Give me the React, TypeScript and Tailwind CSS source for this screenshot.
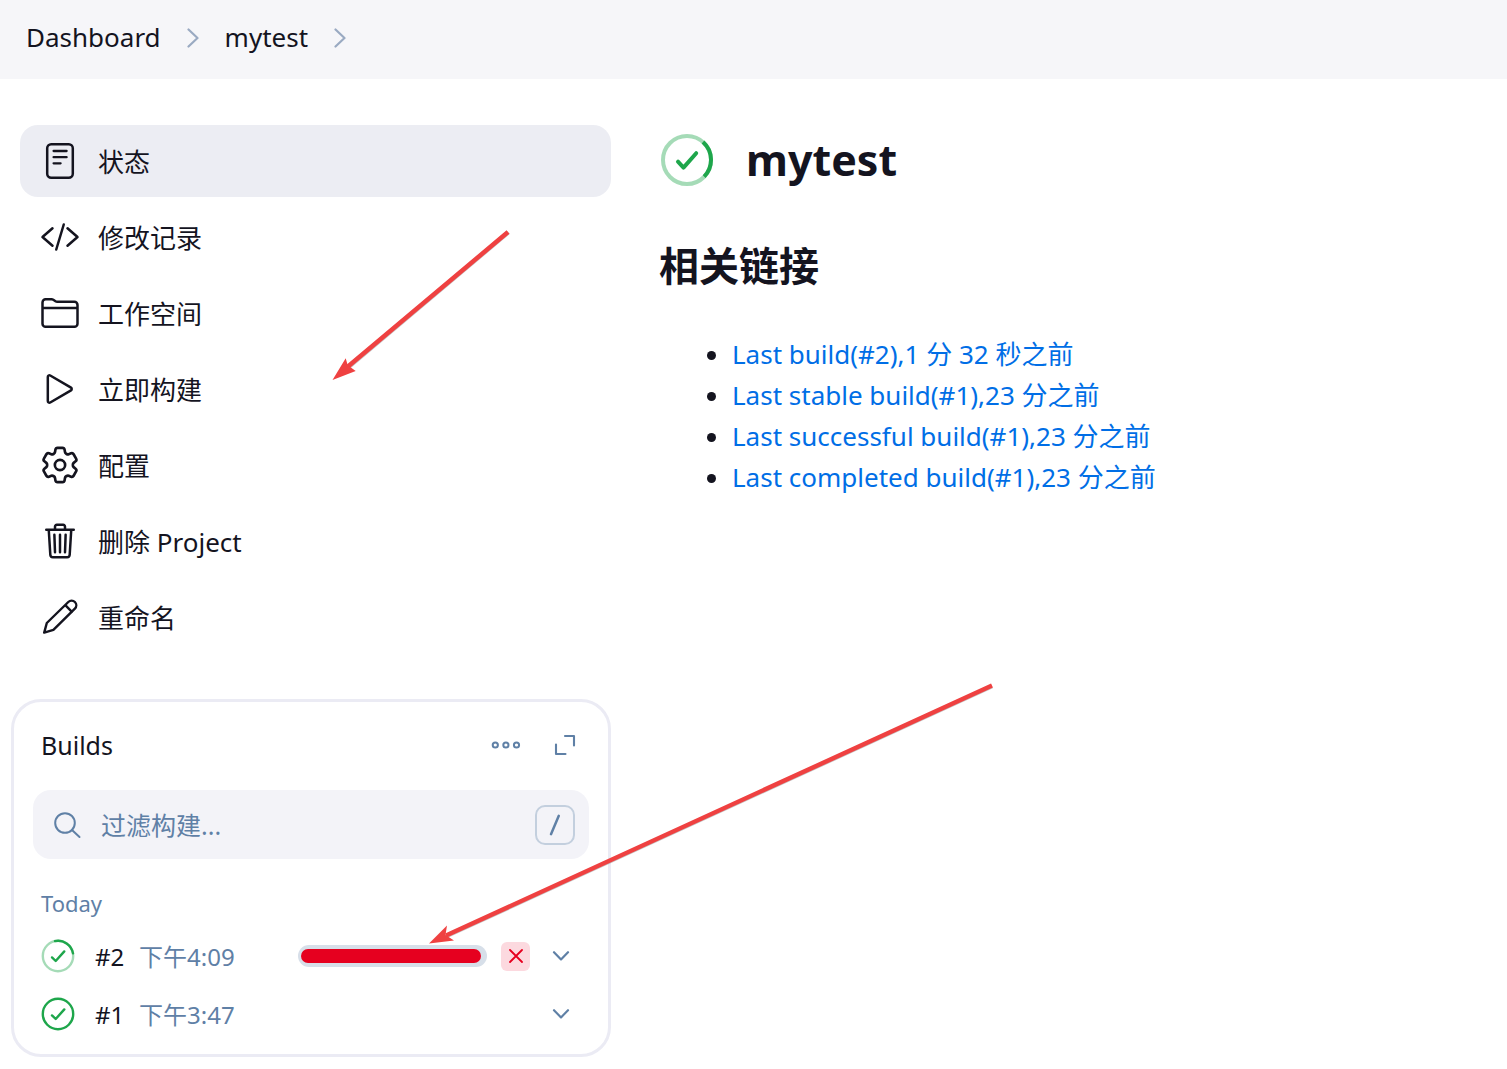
import type { ReactNode } from 'react';

const GEAR =
  'M9.594 3.94c.09-.542.56-.94 1.11-.94h2.593c.55 0 1.02.398 1.11.94l.213 1.281c.063.374.313.686.645.87.074.04.147.083.22.127.325.196.72.257 1.075.124l1.217-.456a1.125 1.125 0 0 1 1.37.49l1.296 2.247a1.125 1.125 0 0 1-.26 1.431l-1.003.827c-.293.241-.438.613-.43.992a7.723 7.723 0 0 1 0 .255c-.008.378.137.75.43.991l1.004.827c.424.35.534.955.26 1.43l-1.298 2.247a1.125 1.125 0 0 1-1.369.491l-1.217-.456c-.355-.133-.75-.072-1.076.124a6.47 6.47 0 0 1-.22.128c-.331.183-.581.495-.644.869l-.213 1.281c-.09.543-.56.94-1.11.94h-2.594c-.55 0-1.019-.398-1.11-.94l-.213-1.281c-.062-.374-.312-.686-.644-.87a6.52 6.52 0 0 1-.22-.127c-.325-.196-.72-.257-1.076-.124l-1.217.456a1.125 1.125 0 0 1-1.369-.49l-1.297-2.247a1.125 1.125 0 0 1 .26-1.431l1.004-.827c.292-.24.437-.613.43-.991a6.932 6.932 0 0 1 0-.255c.007-.38-.138-.751-.43-.992l-1.004-.827a1.125 1.125 0 0 1-.26-1.43l1.297-2.247a1.125 1.125 0 0 1 1.37-.491l1.216.456c.356.133.751.072 1.076-.124.072-.044.146-.086.22-.128.332-.183.582-.495.644-.869l.214-1.28Z';

function Icon({ box, stroke, children }: { box: string; stroke: number; children: ReactNode }) {
  return (
    <svg
      viewBox={box}
      className="size-10 shrink-0"
      fill="none"
      stroke="currentColor"
      strokeWidth={stroke}
      strokeLinecap="round"
      strokeLinejoin="round"
      aria-hidden="true"
    >
      {children}
    </svg>
  );
}

const tasks: { label: string; icon: ReactNode }[] = [
  {
    label: '状态',
    icon: (
      <Icon box="0 0 40 40" stroke={2.5}>
        <rect x="7.2" y="3.3" width="25.6" height="33.4" rx="4" />
        <path d="M13.6 10h13M13.6 16.2h13M13.6 22.3h7" strokeWidth="2.3" />
      </Icon>
    ),
  },
  {
    label: '修改记录',
    icon: (
      <Icon box="0 0 512 512" stroke={32}>
        <path d="M160 368L32 256l128-112M352 368l128-112-128-112M304 96l-96 320" />
      </Icon>
    ),
  },
  {
    label: '工作空间',
    icon: (
      <Icon box="0 0 512 512" stroke={32}>
        <path d="M440 432H72a40 40 0 01-40-40V120a40 40 0 0140-40h75.89a40 40 0 0122.19 6.72l27.84 18.56a40 40 0 0022.19 6.72H440a40 40 0 0140 40v240a40 40 0 01-40 40zM32 192h448" />
      </Icon>
    ),
  },
  {
    label: '立即构建',
    icon: (
      <Icon box="0 0 512 512" stroke={32}>
        <path d="M100 103v306c0 17.44 17 28.52 31 20.16l265.900-156.37c12.12-7.25 12.12-26.33 0-33.58L131 82.84c-14-8.36-31 2.72-31 20.16z" />
      </Icon>
    ),
  },
  {
    label: '配置',
    icon: (
      <Icon box="1.5 1.5 21 21" stroke={1.4}>
        <path d={GEAR} />
        <circle cx="12" cy="12" r="2.7" />
      </Icon>
    ),
  },
  {
    label: '删除 Project',
    icon: (
      <Icon box="0 0 512 512" stroke={32}>
        <path d="M112 112l20 320c.95 18.49 14.4 32 32 32h184c17.67 0 30.87-13.51 32-32l20-320M80 112h352M192 112V72a23.93 23.93 0 0124-24h80a23.93 23.93 0 0124 24v40M256 176v224M184 176l8 224M328 176l-8 224" />
      </Icon>
    ),
  },
  {
    label: '重命名',
    icon: (
      <Icon box="0 0 40 40" stroke={2.4}>
        <path d="M4.2 35.6L6.8 26 28.3 5a4.6 4.6 0 016.600 6.600L13.4 32.8zM25.300 8.200l6.600 6.600" />
      </Icon>
    ),
  },
];

const links = [
  'Last build(#2),1 分 32 秒之前',
  'Last stable build(#1),23 分之前',
  'Last successful build(#1),23 分之前',
  'Last completed build(#1),23 分之前',
];

function Crumb() {
  return (
    <svg viewBox="0 0 12 20" className="h-5 w-3" fill="none" stroke="#9aaac2" strokeWidth="2.2" strokeLinecap="round" strokeLinejoin="round" aria-hidden="true">
      <path d="M1.5 1.5L10.5 10l-9 8.5" />
    </svg>
  );
}

function BuildStatus({ running }: { running: boolean }) {
  return (
    <svg viewBox="0 0 34 34" className="size-[34px] shrink-0" fill="none" stroke="#1ea64b" strokeWidth="2.4" strokeLinecap="round" strokeLinejoin="round" aria-hidden="true">
      <circle cx="17" cy="17" r="15.2" strokeOpacity={running ? 0.4 : 1} />
      {running && <path d="M14 2.1A15.2 15.2 0 0132 14.4" />}
      <path d="M11 18.4l3.7 3.6 8.6-9.6" />
    </svg>
  );
}

function BuildRow({ id, time, running }: { id: string; time: string; running: boolean }) {
  return (
    <li className="flex h-[58px] items-center">
      <BuildStatus running={running} />
      <a href="#build" className="ml-5 w-11 pt-0.5 text-[24px]">
        {id}
      </a>
      <span className="pt-0.5 text-[24px] text-[#5f80a6]">{time}</span>
      <div className="ml-auto flex items-center">
        {running && (
          <>
            <div role="progressbar" aria-label="构建进度" className="flex h-[22px] w-[189px] items-center rounded-full bg-[#d7dfe9] px-[3px]">
              <div className="h-3.5 w-[180px] rounded-full bg-[#e6001f]" />
            </div>
            <button type="button" aria-label="取消" className="ml-3.5 flex size-[29px] items-center justify-center rounded-md bg-[#fcd9df]">
              <svg viewBox="0 0 14 14" className="size-3.5" fill="none" stroke="#e6001f" strokeWidth="1.8" strokeLinecap="round">
                <path d="M1 1l12 12M13 1L1 13" />
              </svg>
            </button>
          </>
        )}
        <button type="button" aria-label="菜单" className="ml-[22px] flex h-8 w-[18px] items-center justify-center">
          <svg viewBox="0 0 18 10" className="h-2.5 w-[18px]" fill="none" stroke="#5f80a6" strokeWidth="2.2" strokeLinecap="round" strokeLinejoin="round">
            <path d="M2 1.2L9 8.4l7-7.2" />
          </svg>
        </button>
      </div>
    </li>
  );
}

export default function App() {
  return (
    <div className="relative min-h-screen bg-white font-['Noto_Sans','Noto_Sans_CJK_SC',sans-serif] text-[26px] text-[#14141f]">
      <nav aria-label="Breadcrumb" className="flex h-[79px] items-center bg-[#f6f6f9] pb-1 pl-[26px]">
        <a href="#dashboard">Dashboard</a>
        <span className="ml-[26px] mr-[26px]"><Crumb /></span>
        <a href="#mytest">mytest</a>
        <span className="ml-[26px]"><Crumb /></span>
      </nav>

      <div className="flex pl-[11px]">
        <aside className="w-[600px] shrink-0 pt-[46px]">
          <nav aria-label="Tasks" className="flex flex-col gap-1 pl-[9px]">
            {tasks.map((task, i) => (
              <a
                key={task.label}
                href="#task"
                className={i === 0 ? 'flex h-[72px] items-center gap-[18px] rounded-[18px] bg-[#ecedf3] px-5' : 'flex h-[72px] items-center gap-[18px] rounded-[18px] px-5'}
              >
                {task.icon}
                <span className="pt-0.5">{task.label}</span>
              </a>
            ))}
          </nav>

          <section aria-label="Builds" className="mt-[46px] rounded-[30px] border-[3px] border-[#ebebf4] px-[19px] pb-[11px]">
            <header className="flex h-[88px] items-center pl-2 pr-[13px]">
              <h2 className="text-[25px]">Builds</h2>
              <button type="button" aria-label="更多" className="ml-auto pb-0.5 text-[#5f80a6]">
                <svg viewBox="0 0 30 10" className="h-2.5 w-[30px]" fill="none" stroke="currentColor" strokeWidth="2">
                  <circle cx="4.3" cy="5" r="2.6" />
                  <circle cx="14.9" cy="5" r="2.6" />
                  <circle cx="25.5" cy="5" r="2.6" />
                </svg>
              </button>
              <button type="button" aria-label="展开" className="ml-[33px] pb-0.5 text-[#5f80a6]">
                <svg viewBox="0 0 22 22" className="size-[22px]" fill="none" stroke="currentColor" strokeWidth="2.1" strokeLinecap="round" strokeLinejoin="round">
                  <path d="M11 2h9v9.500M2 10.500V20h9.500" />
                </svg>
              </button>
            </header>

            <div className="flex h-[69px] items-center rounded-[18px] bg-[#f3f3f8] pl-5 pr-3.5 text-[#5f80a6]">
              <svg viewBox="0 0 28 28" className="size-7 shrink-0" fill="none" stroke="currentColor" strokeWidth="2" strokeLinecap="round" aria-hidden="true">
                <circle cx="12" cy="12" r="9.8" />
                <path d="M19 19l7.500 7" />
              </svg>
              <input
                type="text"
                aria-label="过滤构建"
                placeholder="过滤构建..."
                className="ml-5 min-w-0 flex-1 bg-transparent pt-0.5 text-[25px] outline-none placeholder:text-[#5f80a6]"
              />
              <svg viewBox="0 0 40 40" className="size-10 shrink-0" fill="none" strokeLinecap="round" aria-hidden="true">
                <rect x="1" y="1" width="38" height="38" rx="9" stroke="#c3cfde" strokeWidth="2" />
                <path d="M23.800 10.800l-7.800 18.400" stroke="#5f80a6" strokeWidth="2.500" />
              </svg>
            </div>

            <h3 className="mt-7 pl-2 text-[22px] leading-8 text-[#5f80a6]">Today</h3>
            <ul className="mt-2 pl-2 pr-[19px]">
              <BuildRow id="#2" time="下午4:09" running />
              <BuildRow id="#1" time="下午3:47" running={false} />
            </ul>
          </section>
        </aside>

        <main className="min-w-0 flex-1 pl-12 pt-[51px]">
          <div className="flex h-[60px] items-center gap-[33px] pl-0.5">
            <svg viewBox="0 0 52 52" className="size-[52px] shrink-0" fill="none" stroke="#1ea64b" strokeWidth="4" strokeLinecap="round" strokeLinejoin="round" aria-hidden="true">
              <circle cx="26" cy="26" r="24" strokeOpacity="0.4" />
              <path d="M42 8.100A24 24 0 0143.200 42.700" strokeLinecap="butt" />
              <path d="M17 27.600l5.500 6 12.700-14.400" />
            </svg>
            <h1 className="text-[43px] font-bold">mytest</h1>
          </div>
          <h2 className="mt-11 text-[40px] font-bold leading-[64px]">相关链接</h2>
          <ul className="mt-9 list-disc pl-[73px] leading-[41px]">
            {links.map((text) => (
              <li key={text}>
                <a href="#build" className="text-[#006ee6]">{text}</a>
              </li>
            ))}
          </ul>
        </main>
      </div>

      {/* Annotation arrows lie over the page. */}
      <svg viewBox="0 0 1000 720" className="pointer-events-none absolute left-0 top-[230px] h-[720px] w-[1000px]" aria-hidden="true">
        <g stroke="#8a8a8a" strokeWidth="4" opacity="0.5">
          <path d="M508.500 2.500L346 139.500M992 456.500L446 706.500" />
        </g>
        <g stroke="#ef4141" strokeWidth="4.500" fill="#ef4141">
          <path d="M508 2L345 139M992 455.500L446 705.500" />
          <path stroke="none" d="M332.500 150l13.200-21.700 2 7 8 5.700zM429 713.500l18-18-1.500 9.500 8.500 5.500z" />
        </g>
      </svg>
    </div>
  );
}
